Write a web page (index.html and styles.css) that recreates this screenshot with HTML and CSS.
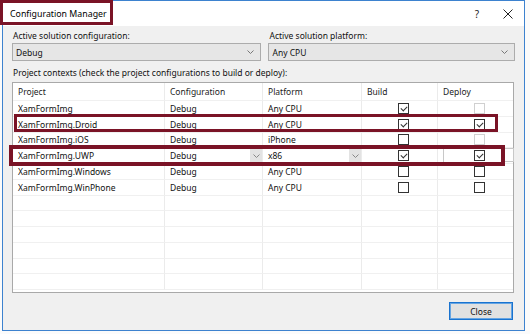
FILE: index.html
```html
<!DOCTYPE html>
<html>
<head>
<meta charset="utf-8">
<link rel="stylesheet" href="styles.css">
</head>
<body>
<div class="window">
  <div class="titlebar">
    <span class="title">Configuration Manager</span>
    <span class="tb-btns"><span class="help">?</span><span class="xbtn"><svg width="10" height="10" viewBox="0 0 10 10"><path d="M0.5 0.5 L9.5 9.5 M9.5 0.5 L0.5 9.5" stroke="#222" stroke-width="1" fill="none"/></svg></span></span>
  </div>
  <div class="body">
    <div class="selectors">
      <div class="field f-left">
        <div class="lbl">Active solution configuration:</div>
        <div class="combo"><span>Debug</span><svg class="chev" width="7" height="4" viewBox="0 0 7 4"><path d="M0.5 0.5 L3.5 3.5 L6.5 0.5" stroke="#777" fill="none"/></svg></div>
      </div>
      <div class="field f-right">
        <div class="lbl">Active solution platform:</div>
        <div class="combo"><span>Any CPU</span><svg class="chev" width="7" height="4" viewBox="0 0 7 4"><path d="M0.5 0.5 L3.5 3.5 L6.5 0.5" stroke="#777" fill="none"/></svg></div>
      </div>
    </div>
    <div class="ctx">Project contexts (check the project configurations to build or deploy):</div>
    <div class="grid">
      <div class="c h">Project</div><div class="c h">Configuration</div><div class="c h">Platform</div><div class="c h">Build</div><div class="c h last">Deploy</div>

      <div class="c">XamFormImg</div><div class="c">Debug</div><div class="c">Any CPU</div><div class="c cb"><span class="box on"></span></div><div class="c cb last"><span class="box dis"></span></div>

      <div class="c">XamFormImg.Droid</div><div class="c">Debug</div><div class="c">Any CPU</div><div class="c cb"><span class="box on"></span></div><div class="c cb last"><span class="box on"></span></div>

      <div class="c">XamFormImg.iOS</div><div class="c">Debug</div><div class="c">iPhone</div><div class="c cb"><span class="box"></span></div><div class="c cb last"><span class="box dis"></span></div>

      <div class="c">XamFormImg.UWP</div><div class="c edit">Debug<span class="drop"><svg width="7" height="4" viewBox="0 0 7 4"><path d="M0.5 0.5 L3.5 3.5 L6.5 0.5" stroke="#888" fill="none"/></svg></span></div><div class="c edit">x86<span class="drop"><svg width="7" height="4" viewBox="0 0 7 4"><path d="M0.5 0.5 L3.5 3.5 L6.5 0.5" stroke="#888" fill="none"/></svg></span></div><div class="c cb"><span class="box on"></span></div><div class="c cb last"><span class="box on"></span></div>

      <div class="c">XamFormImg.Windows</div><div class="c">Debug</div><div class="c">Any CPU</div><div class="c cb"><span class="box"></span></div><div class="c cb last"><span class="box"></span></div>

      <div class="c">XamFormImg.WinPhone</div><div class="c">Debug</div><div class="c">Any CPU</div><div class="c cb"><span class="box"></span></div><div class="c cb last"><span class="box"></span></div>

      <div class="c"></div><div class="c"></div><div class="c"></div><div class="c"></div><div class="c last"></div>
      <div class="c"></div><div class="c"></div><div class="c"></div><div class="c"></div><div class="c last"></div>
      <div class="c"></div><div class="c"></div><div class="c"></div><div class="c"></div><div class="c last"></div>
      <div class="c"></div><div class="c"></div><div class="c"></div><div class="c"></div><div class="c last"></div>
      <div class="c"></div><div class="c"></div><div class="c"></div><div class="c"></div><div class="c last"></div>
      <div class="c"></div><div class="c"></div><div class="c"></div><div class="c"></div><div class="c last"></div>
    </div>
    <div class="footer"><button class="btn">Close</button></div>
  </div>
  <div class="deploy-edit"></div>
  <div class="deploy-stub"></div>
  <div class="hl hl-title"></div>
  <div class="hl hl-droid"></div>
  <div class="hl hl-uwp"></div>
</div>
</body>
</html>
```

FILE: styles.css
```css
* { box-sizing: border-box; }
html, body { margin: 0; padding: 0; background: #fbfbfb; }
body {
  font-family: "Noto Sans", "Open Sans", sans-serif;
  font-size: 8.5px;
  color: #111;
  width: 530px;
  height: 334px;
  overflow: hidden;
}
.window {
  position: relative;
  margin-left: 2px;
  width: 523px;
  height: 331px;
  border: 1px solid #3d82cf;
  background: #f0f0f0;
}
.titlebar {
  height: 25px;
  background: #fff;
  display: flex;
  align-items: center;
  justify-content: space-between;
  padding-left: 7px;
}
.title { font-size: 8.8px; color: #000; }
.tb-btns { display: flex; align-items: center; }
.help { font-size: 10px; color: #222; margin-right: 24px; }
.xbtn { display: flex; margin-right: 11px; }
.body { padding: 3px 9px 0 9px; }
.selectors { display: flex; gap: 7px; }
.f-left { width: 251px; }
.f-right { width: 248px; }
.lbl { height: 13px; line-height: 13px; margin-left: 1px; }
.combo {
  margin-top: 1px;
  height: 18px;
  background: #e6e6e6;
  border: 1px solid #acacac;
  display: flex;
  align-items: center;
  justify-content: space-between;
  padding: 0 6px 0 3px;
}
.ctx { margin-top: 6px; height: 12px; line-height: 12px; margin-left: 1px; }
.grid {
  margin-top: 3px;
  width: 502px;
  height: 211px;
  border: 1px solid #a9a9a9;
  background: #fff;
  display: grid;
  grid-template-columns: 152px 98px 99px 76px 75px;
  grid-template-rows: 18px;
  grid-auto-rows: 15.75px;
  overflow: hidden;
}
.c {
  border-right: 1px solid #ebebeb;
  border-bottom: 1px solid #f0f0f0;
  padding-left: 5px;
  display: flex;
  align-items: center;
  white-space: nowrap;
  position: relative;
}
.c.last { border-right: none; }
.c.h { color: #222; }
.c.cb { justify-content: center; padding-left: 7px; }
.box {
  width: 11px;
  height: 11px;
  border: 1px solid #333;
  background: #fff;
  position: relative;
}
.box.dis { border-color: #d0d0d0; }
.box.on::after {
  content: "";
  position: absolute;
  left: 2px;
  top: 0px;
  width: 5px;
  height: 3px;
  border-left: 1px solid #333;
  border-bottom: 1px solid #333;
  transform: translate(0, 2px) rotate(-45deg);
}
.c.edit { justify-content: space-between; padding-right: 0; }
.drop {
  width: 12px;
  height: 100%;
  background: #e3e3e3;
  display: flex;
  align-items: center;
  justify-content: center;
}
.footer { display: flex; justify-content: flex-end; padding-top: 9px; padding-right: 2px; }
.btn {
  width: 64px;
  height: 18px;
  background: #e1e1e1;
  border: 1px solid #1a73cf;
  box-shadow: inset 0 0 0 1px #66a5e3;
  font-family: inherit;
  font-size: 8.5px;
  color: #111;
  padding: 0;
}
.deploy-edit {
  position: absolute;
  left: 440px;
  top: 147px;
  width: 60px;
  height: 15px;
  border: 1px solid #c8c8c8;
  border-right: none;
  border-bottom: none;
}
.deploy-stub {
  position: absolute;
  left: 500px;
  top: 147px;
  width: 11px;
  height: 14px;
  border: 1px solid #c8c8c8;
  background: #fff;
}
.hl {
  position: absolute;
  border: 3px solid #7a1326;
}
.hl-title { left: -3px; top: -1px; width: 113px; height: 25px; }
.hl-droid { left: 11px; top: 113px; width: 484px; height: 18px; }
.hl-uwp { left: 6px; top: 144px; width: 496px; height: 21px; border-width: 4px; }
```
